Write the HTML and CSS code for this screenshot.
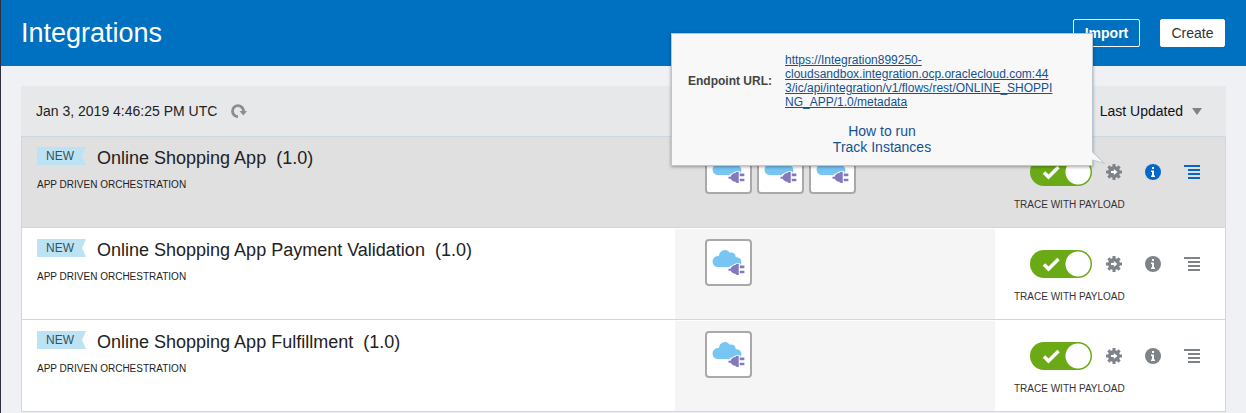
FILE: index.html
```html
<!DOCTYPE html>
<html lang="en">
<head>
<meta charset="utf-8">
<title>Integrations</title>
<link rel="stylesheet" href="styles.css">
</head>
<body>
<svg class="sprite" aria-hidden="true">
  <symbol id="cloud-plug" viewBox="0 0 42 42">
    <path fill="#76c5f3" d="M11 25.500a5.400 5.400 0 0 1-.4-10.800c.8-.1 1-.2 1.200-.9a5.800 5.800 0 0 1 10.500-2.400c2.800-.8 5.200.8 5.600 3.400.1.900.4 1 1.200 1.100 3.200.4 5 2.700 4.400 5.700l-.6 1.400H27l-5.500 2.500z"/>
    <path fill="#fff" d="m20 26.500 5-3 4-2h3v12h-3l-4-2-5-3z"/>
    <path fill="#8379bd" d="M21 27h2c1-2 2.500-3.500 4.500-3.500l1.500-1.200H31v11h-2L27.500 32c-2-.1-3.500-1.500-4.500-3h-2zM32 24h4.500v2.500H32zM32 29h4.500v2.500H32z"/>
  </symbol>
  <symbol id="gear" viewBox="0 0 16 16">
    <g fill="currentColor"><circle cx="8" cy="8" r="6"/>
    <path d="M6.500 0h3v16h-3zM0 6.500h16v3H0z"/>
    <path d="m3.400 1.300 11.300 11.300-2.100 2.100L1.300 3.400zM12.600 1.300l2.100 2.100L3.400 14.700l-2.100-2.100z"/></g>
    <path fill="#fff" d="M5 7h2.800V5L11.500 8l-3.700 3V9H5z"/>
  </symbol>
  <symbol id="info" viewBox="0 0 16 16">
    <circle cx="8" cy="8" r="8" fill="currentColor"/>
    <path fill="#fff" d="M7 3h2v2H7zM6 6.500h3v5h1V13H6v-1.500h1V8H6z"/>
  </symbol>
  <symbol id="lines" viewBox="0 0 16 16">
    <path fill="currentColor" d="M0 1h16v2H0zM4 5h12v2H4zM4 9h12v2H4zM4 13h12v2H4z"/>
  </symbol>
</svg>

<header class="header">
  <h1 class="title">Integrations</h1>
  <button class="button button-outline" type="button">Import</button>
  <button class="button" type="button">Create</button>
</header>

<main class="panel">
  <div class="toolbar">
    <span class="timestamp">Jan 3, 2019 4:46:25 PM UTC</span>
    <button class="icon-button" type="button" aria-label="Refresh">
      <svg width="16" height="16" viewBox="0 0 16 16"><path fill="none" stroke="#8a8f94" stroke-width="2.800" d="M7 13.600A5.500 5.500 0 1 1 12.500 8.500"/><path fill="#8a8f94" d="M8.500 8H16l-3.700 4.500z"/></svg>
    </button>
    <button class="sort" type="button">Last Updated <span class="caret"></span></button>
  </div>

  <section class="row row-selected">
    <div class="summary">
      <span class="tag">NEW</span>
      <h2 class="name">Online Shopping App&nbsp; (1.0)</h2>
      <p class="style">APP DRIVEN ORCHESTRATION</p>
    </div>
    <div class="connections">
      <span class="tile"><svg viewBox="0 0 42 42"><use href="#cloud-plug"/></svg></span>
      <span class="tile"><svg viewBox="0 0 42 42"><use href="#cloud-plug"/></svg></span>
      <span class="tile"><svg viewBox="0 0 42 42"><use href="#cloud-plug"/></svg></span>
    </div>
    <div class="actions">
      <div class="controls">
        <label class="toggle"><input type="checkbox" checked aria-label="Active"><svg viewBox="0 0 62 28"><path fill="none" stroke="#fff" stroke-width="3.500" d="m14 14.500 4.500 4.500 10-10"/></svg></label>
        <div class="run">
          <button class="icon-button" type="button" aria-label="Run"><svg width="16" height="16"><use href="#gear"/></svg></button>
          <div class="popup">
            <div class="endpoint">
              <span class="endpoint-label">Endpoint URL:</span>
              <a class="endpoint-link" href="#">https://Integration899250-<br>cloudsandbox.integration.ocp.oraclecloud.com:44<br>3/ic/api/integration/v1/flows/rest/ONLINE_SHOPPI<br>NG_APP/1.0/metadata</a>
            </div>
            <nav class="popup-links">
              <a href="#">How to run</a>
              <a href="#">Track Instances</a>
            </nav>
            <svg class="tail" viewBox="0 0 15 16"><path fill="#f8f8f8" d="M0 1 13 14 1 10 0 14z"/><path fill="none" stroke="#b9c7d3" d="M1.500 1.500 13.500 13.500 1.500 10v4"/></svg>
          </div>
        </div>
        <button class="icon-button icon-blue" type="button" aria-label="Details"><svg width="16" height="16"><use href="#info"/></svg></button>
        <button class="icon-button icon-blue" type="button" aria-label="Menu"><svg width="16" height="16"><use href="#lines"/></svg></button>
      </div>
      <p class="trace">TRACE WITH PAYLOAD</p>
    </div>
  </section>

  <section class="row">
    <div class="summary">
      <span class="tag">NEW</span>
      <h2 class="name">Online Shopping App Payment Validation&nbsp; (1.0)</h2>
      <p class="style">APP DRIVEN ORCHESTRATION</p>
    </div>
    <div class="connections">
      <span class="tile"><svg viewBox="0 0 42 42"><use href="#cloud-plug"/></svg></span>
    </div>
    <div class="actions">
      <div class="controls">
        <label class="toggle"><input type="checkbox" checked aria-label="Active"><svg viewBox="0 0 62 28"><path fill="none" stroke="#fff" stroke-width="3.500" d="m14 14.500 4.500 4.500 10-10"/></svg></label>
        <div class="run"><button class="icon-button" type="button" aria-label="Run"><svg width="16" height="16"><use href="#gear"/></svg></button></div>
        <button class="icon-button" type="button" aria-label="Details"><svg width="16" height="16"><use href="#info"/></svg></button>
        <button class="icon-button" type="button" aria-label="Menu"><svg width="16" height="16"><use href="#lines"/></svg></button>
      </div>
      <p class="trace">TRACE WITH PAYLOAD</p>
    </div>
  </section>

  <section class="row">
    <div class="summary">
      <span class="tag">NEW</span>
      <h2 class="name">Online Shopping App Fulfillment&nbsp; (1.0)</h2>
      <p class="style">APP DRIVEN ORCHESTRATION</p>
    </div>
    <div class="connections">
      <span class="tile"><svg viewBox="0 0 42 42"><use href="#cloud-plug"/></svg></span>
    </div>
    <div class="actions">
      <div class="controls">
        <label class="toggle"><input type="checkbox" checked aria-label="Active"><svg viewBox="0 0 62 28"><path fill="none" stroke="#fff" stroke-width="3.500" d="m14 14.500 4.500 4.500 10-10"/></svg></label>
        <div class="run"><button class="icon-button" type="button" aria-label="Run"><svg width="16" height="16"><use href="#gear"/></svg></button></div>
        <button class="icon-button" type="button" aria-label="Details"><svg width="16" height="16"><use href="#info"/></svg></button>
        <button class="icon-button" type="button" aria-label="Menu"><svg width="16" height="16"><use href="#lines"/></svg></button>
      </div>
      <p class="trace">TRACE WITH PAYLOAD</p>
    </div>
  </section>
</main>
</body>
</html>
```
FILE: styles.css
```css
* { box-sizing: border-box; }
body {
  min-height: 100vh;
  margin: 0;
  border-left: 1px solid #2c2f3c;
  background: #f0f1f4;
  color: #222;
  font: 14px/16px "Liberation Sans", Arial, sans-serif;
}
h1, h2, p { margin: 0; font-weight: normal; }
button { font: inherit; }
svg { display: block; }
.sprite { position: absolute; width: 0; height: 0; }

.header {
  display: flex;
  align-items: center;
  gap: 20px;
  height: 66px;
  padding: 0 21px 0 20px;
  background: #0070c0;
}
.title { flex: 1; color: #fff; font-size: 27px; line-height: 32px; }
.button {
  height: 28px;
  padding: 0 10px;
  border: 1px solid #fff;
  border-radius: 2px;
  background: #fff;
  color: #333;
  min-width: 65px;
}
.button-outline { background: transparent; color: #fff; font-weight: bold; min-width: 67px; }

.panel { margin: 20px 20px 0; }
.toolbar {
  display: flex;
  align-items: center;
  height: 50px;
  padding: 0 24px 0 15px;
  gap: 14px;
  background: #e7e8ea;
}
.icon-button { display: block; padding: 0; border: 0; background: none; color: #7d8388; }
.icon-blue { color: #0567ca; }
.sort {
  display: flex;
  align-items: center;
  gap: 9px;
  margin-left: auto;
  padding: 0;
  border: 0;
  background: none;
  color: #111;
}
.caret { border: 5px solid transparent; border-top: 7px solid #7d8388; border-bottom: 0; }

.row {
  display: grid;
  grid-template-columns: 1fr 320px 230px;
  min-height: 92px;
  padding-top: 1px;
  border: 1px solid #ccd7df;
  border-top: 0;
  background: #fff;
}
.row-selected { padding-top: 0; border-top: 1px solid #ccd7df; }
.summary {
  display: grid;
  grid-template-columns: 49px 1fr;
  column-gap: 11px;
  row-gap: 10px;
  align-content: start;
  padding: 10px 15px;
}
.tag {
  height: 18px;
  padding-left: 9px;
  background: #bce3f3;
  clip-path: polygon(0 0, 100% 0, 92% 50%, 100% 100%, 0 100%);
  color: #35505e;
  font-size: 12px;
  line-height: 18px;
}
.name { font-size: 18px; line-height: 22px; }
.style { grid-column: 1 / -1; font-size: 10px; line-height: 12px; }
.connections { display: flex; gap: 5px; padding: 10px 30px; background: #f5f5f5; }
.tile {
  width: 47px;
  height: 47px;
  border: 2px solid #a9a9a9;
  border-radius: 4px;
  background: #fff;
}
.row-selected, .row-selected .connections { background: #e0e0e0; }
.actions { padding: 21px 19px 0; }
.controls { display: flex; align-items: center; gap: 23px; padding-left: 16px; }
.toggle { position: relative; width: 62px; height: 28px; margin-right: -9px; }
.toggle input {
  appearance: none;
  width: 62px;
  height: 28px;
  margin: 0;
  border-radius: 14px;
  background: radial-gradient(circle at 48px 14px, #fff 12px, transparent 13px) #6aaa16;
}
.toggle svg { position: absolute; inset: 0; pointer-events: none; }
.trace { margin-top: 13px; color: #333; font-size: 10px; line-height: 12px; }

.run { position: relative; }
.popup {
  position: absolute;
  right: 29px;
  bottom: 14px;
  width: 422px;
  padding: 19px 16px 10px;
  border: 1px solid #b9c7d3;
  background: #f8f8f8;
  box-shadow: 0 1px 3px rgba(0, 0, 0, .35);
}
.endpoint { display: flex; align-items: center; gap: 12px; font-size: 12px; line-height: 14px; }
.endpoint-label { flex: none; width: 85px; color: #444; font-weight: bold; }
.endpoint-link { color: #145291; white-space: nowrap; }
.popup-links { display: flex; flex-direction: column; align-items: center; margin-top: 14px; }
.popup-links a { color: #145291; text-decoration: none; }
.tail { position: absolute; left: 419px; bottom: -1px; width: 15px; height: 16px; }
```
